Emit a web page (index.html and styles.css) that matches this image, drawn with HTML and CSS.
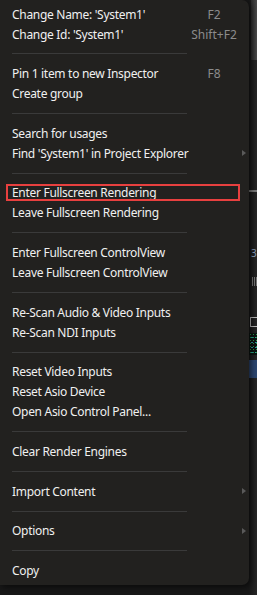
FILE: index.html
```html
<!DOCTYPE html>
<html>
<head>
<meta charset="utf-8">
<link rel="stylesheet" href="styles.css">
</head>
<body>
<div class="backdrop">
  <div class="bg-top"></div>
  <div class="bg-line"></div>
  <div class="bg-text">3</div>
  <div class="bg-bars"></div>
  <div class="bg-icon"></div>
  <div class="bg-noise"></div>
  <div class="bg-blue"></div>
</div>
<div class="menu">
  <div class="item"><span class="label">Change Name: 'System1'</span><span class="key">F2</span></div>
  <div class="item"><span class="label">Change Id: 'System1'</span><span class="key">Shift+F2</span></div>
  <div class="sep"></div>
  <div class="item"><span class="label">Pin 1 item to new Inspector</span><span class="key">F8</span></div>
  <div class="item"><span class="label">Create group</span></div>
  <div class="sep"></div>
  <div class="item"><span class="label">Search for usages</span></div>
  <div class="item sub"><span class="label">Find 'System1' in Project Explorer</span></div>
  <div class="sep"></div>
  <div class="item marked"><span class="label">Enter Fullscreen Rendering</span></div>
  <div class="item"><span class="label">Leave Fullscreen Rendering</span></div>
  <div class="sep"></div>
  <div class="item"><span class="label">Enter Fullscreen ControlView</span></div>
  <div class="item"><span class="label">Leave Fullscreen ControlView</span></div>
  <div class="sep"></div>
  <div class="item"><span class="label">Re-Scan Audio &amp; Video Inputs</span></div>
  <div class="item"><span class="label">Re-Scan NDI Inputs</span></div>
  <div class="sep"></div>
  <div class="item"><span class="label">Reset Video Inputs</span></div>
  <div class="item"><span class="label">Reset Asio Device</span></div>
  <div class="item"><span class="label">Open Asio Control Panel...</span></div>
  <div class="sep"></div>
  <div class="item"><span class="label">Clear Render Engines</span></div>
  <div class="sep"></div>
  <div class="item sub"><span class="label">Import Content</span></div>
  <div class="sep"></div>
  <div class="item sub"><span class="label">Options</span></div>
  <div class="sep"></div>
  <div class="item"><span class="label">Copy</span></div>
</div>
</body>
</html>
```

FILE: styles.css
```css
html, body {
  margin: 0;
  padding: 0;
}
body {
  width: 257px;
  height: 595px;
  background: #2a2a2a;
  position: relative;
  overflow: hidden;
  font-family: "Noto Sans", "Open Sans", sans-serif;
  font-size: 12px;
}
.backdrop {
  position: absolute;
  inset: 0;
  background: linear-gradient(to right, #181818 0, #181818 249px, #1c1c1c 251px, #262626 257px);
}
.bg-top {
  position: absolute;
  left: 251px;
  top: 0;
  width: 6px;
  height: 60px;
  background: linear-gradient(to right, #2a2a2a, #4a4a4a);
}
.bg-line {
  position: absolute;
  left: 249px;
  top: 190px;
  width: 8px;
  height: 2px;
  background: #7a7a7a;
}
.bg-text {
  position: absolute;
  left: 251px;
  top: 246px;
  color: #8fa3c0;
  font-size: 10px;
}
.bg-bars {
  position: absolute;
  left: 252px;
  top: 277px;
  width: 5px;
  height: 9px;
  background: repeating-linear-gradient(to right, #777 0 1px, transparent 1px 2px);
}
.bg-icon {
  position: absolute;
  left: 250px;
  top: 317px;
  width: 6px;
  height: 8px;
  border: 1px solid #bbb;
  border-right: none;
}
.bg-noise {
  position: absolute;
  left: 249px;
  top: 333px;
  width: 8px;
  height: 22px;
  background: #0b1410;
  background-image: radial-gradient(#2a9a4a 0.6px, transparent 0.8px), radial-gradient(#2aa0a0 0.6px, transparent 0.8px);
  background-size: 3px 3px, 4px 5px;
  background-position: 0 0, 1px 2px;
}
.bg-blue {
  position: absolute;
  left: 249px;
  top: 360px;
  width: 8px;
  height: 18px;
  background: #2c4670;
}
.menu {
  position: absolute;
  left: 0;
  top: 0;
  width: 249px;
  height: 585px;
  box-sizing: border-box;
  padding-top: 4px;
  background: #22211f;
  border-radius: 0 7px 7px 0;
  box-shadow: 2px 2px 6px rgba(0, 0, 0, 0.6);
}
.item {
  position: relative;
  height: 20px;
  display: flex;
  align-items: center;
  padding-left: 12px;
  color: #f0f0f0;
  white-space: nowrap;
  letter-spacing: -0.3px;
}
.label {
  width: 175px;
  flex: none;
}
.key {
  width: 54px;
  text-align: center;
  color: #8c8c8c;
  letter-spacing: 0;
}
.sub::after {
  content: "";
  position: absolute;
  left: 242px;
  top: 7px;
  border-left: 4px solid #5a5a5a;
  border-top: 3.5px solid transparent;
  border-bottom: 3.5px solid transparent;
}
.marked::before {
  content: "";
  position: absolute;
  left: 6px;
  top: 1px;
  width: 230px;
  height: 13px;
  border: 2px solid #e8403f;
}
.sep {
  height: 19.67px;
  display: flex;
  align-items: center;
  padding-left: 12px;
}
.sep::before {
  content: "";
  width: 175px;
  height: 1px;
  background: #3a3a3a;
}
```
